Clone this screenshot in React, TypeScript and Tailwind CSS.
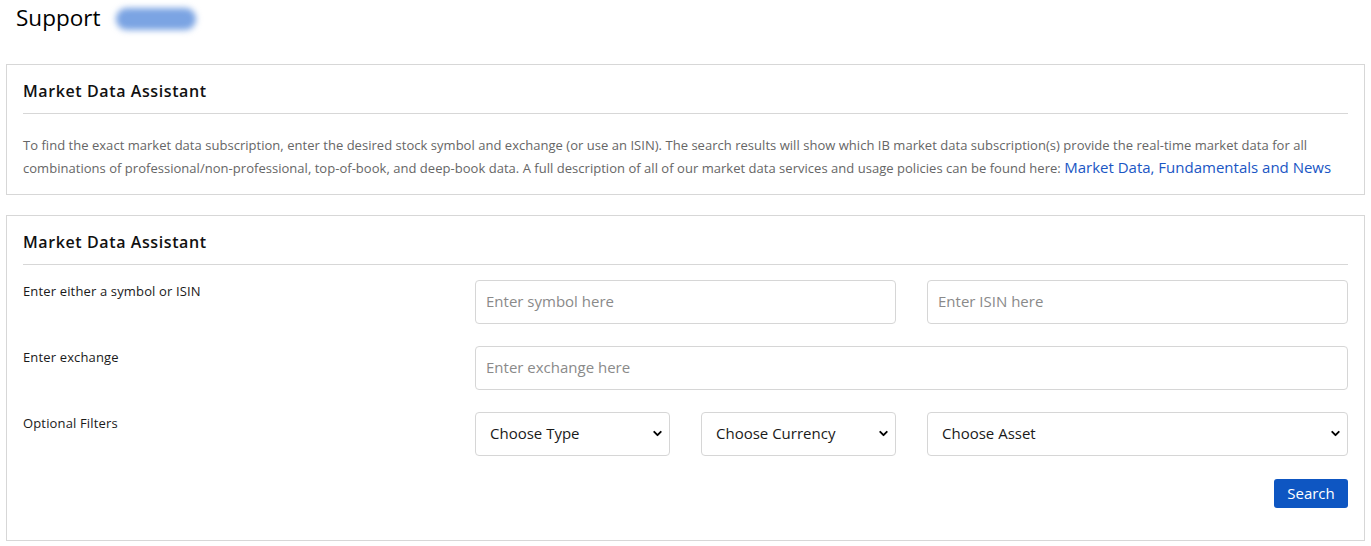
import { ChevronDown } from 'lucide-react'

const font = { fontFamily: '"Open Sans", Lato, sans-serif' }

function Field({ placeholder, className = '' }: { placeholder: string; className?: string }) {
  return (
    <input
      type="text"
      placeholder={placeholder}
      className={`h-[44px] rounded-[4px] border border-[#d6d6d6] bg-white px-[10px] pb-[2px] text-[15px] text-[#222] placeholder:text-[#8a8a8a] focus:outline-none ${className}`}
    />
  )
}

function Select({ label, className = '' }: { label: string; className?: string }) {
  return (
    <div className={`flex h-[44px] items-center justify-between rounded-[4px] border border-[#d6d6d6] bg-white pb-[2px] pl-[14px] pr-[5px] ${className}`}>
      <span className="text-[15px] text-[#1a1a1a]">{label}</span>
      <ChevronDown className="h-[13px] w-[13px] text-black" strokeWidth={3.5} />
    </div>
  )
}

export default function App() {
  return (
    <div className="min-h-[546px] bg-white px-[6px] text-[#1a1a1a]" style={font}>
      <div className="flex h-[38px] items-center gap-[16px] pl-[10px]">
        <h1 className="-mt-[2px] text-[22.5px] leading-none text-black">Support</h1>
        <span className="h-[22px] w-[80px] rounded-full bg-[#7ba4e3] blur-[3px]" />
      </div>

      <div className="mt-[26px] border border-[#d7d7d7] px-[16px] pb-[15px]">
        <h2 className="flex h-[48px] items-center pt-[4px] text-[16px] font-semibold tracking-[0.6px] text-[#111]">Market Data Assistant</h2>
        <div className="border-t border-[#d7d7d7]" />
        <p className="mt-[20px] text-[13px] leading-[22px] tracking-[0.03px] text-[#666]">
          To find the exact market data subscription, enter the desired stock symbol and exchange (or use an ISIN). The search results will show which IB market data subscription(s) provide the real-time market data for all combinations of professional/non-professional, top-of-book, and deep-book data. A full description of all of our market data services and usage policies can be found here:{' '}
          <a className="text-[15px] tracking-normal text-[#1a56c4]">Market Data, Fundamentals and News</a>
        </p>
      </div>

      <div className="mt-[20px] border border-[#d7d7d7] px-[16px] pb-[32px]">
        <h2 className="flex h-[48px] items-center pt-[4px] text-[16px] font-semibold tracking-[0.6px] text-[#111]">Market Data Assistant</h2>
        <div className="border-t border-[#d7d7d7]" />

        <div className="mt-[15px] flex flex-col gap-[22px]">
          <div className="flex">
            <div className="w-[452px] pt-[2px] text-[13px] tracking-[0.15px]">Enter either a symbol or ISIN</div>
            <div className="flex flex-1 gap-[31px]">
              <Field placeholder="Enter symbol here" className="flex-1" />
              <Field placeholder="Enter ISIN here" className="flex-1" />
            </div>
          </div>
          <div className="flex">
            <div className="w-[452px] pt-[2px] text-[13px] tracking-[0.15px]">Enter exchange</div>
            <Field placeholder="Enter exchange here" className="flex-1" />
          </div>
          <div className="flex">
            <div className="w-[452px] pt-[2px] text-[13px] tracking-[0.15px]">Optional Filters</div>
            <div className="flex flex-1 gap-[31px]">
              <Select label="Choose Type" className="w-[195px]" />
              <Select label="Choose Currency" className="w-[195px]" />
              <Select label="Choose Asset" className="flex-1" />
            </div>
          </div>
        </div>

        <div className="mt-[23px] flex justify-end">
          <button className="h-[29px] w-[74px] rounded-[3px] bg-[#0e56c2] text-[15px] text-white">Search</button>
        </div>
      </div>
    </div>
  )
}
